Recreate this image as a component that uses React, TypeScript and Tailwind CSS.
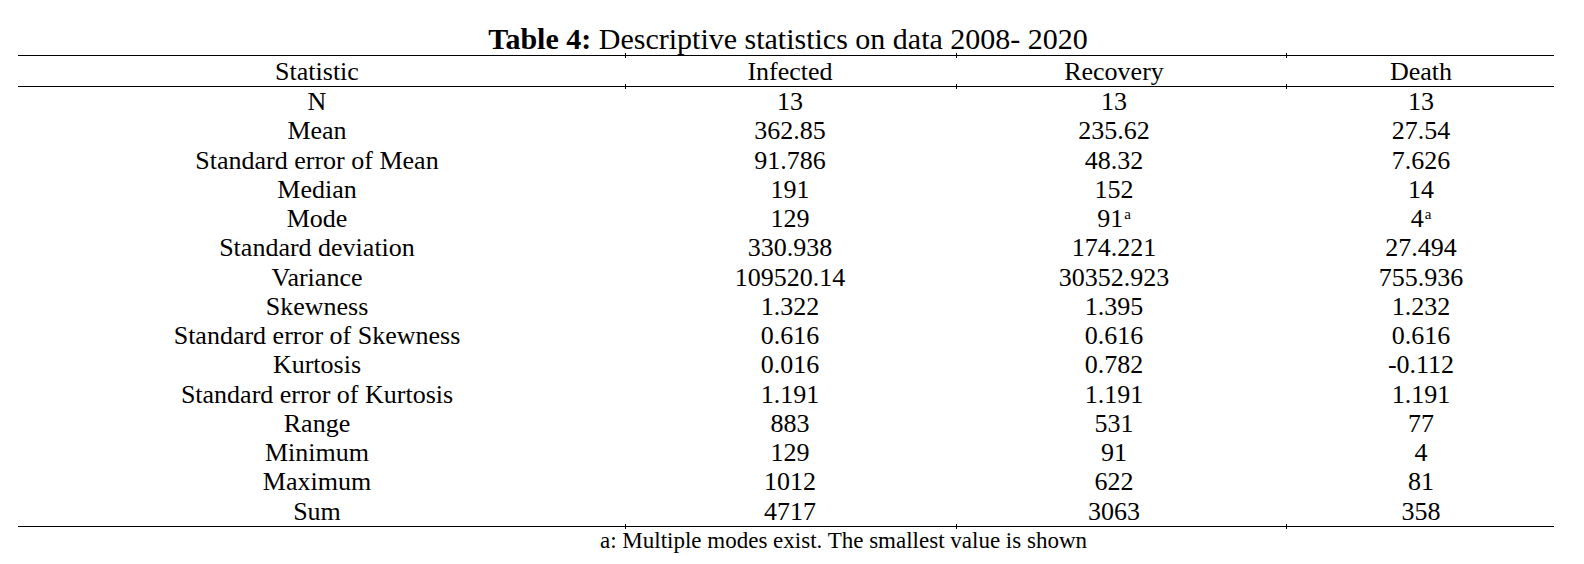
const rows: [string, string, string, string][] = [
  ["N", "13", "13", "13"],
  ["Mean", "362.85", "235.62", "27.54"],
  ["Standard error of Mean", "91.786", "48.32", "7.626"],
  ["Median", "191", "152", "14"],
  ["Mode", "129", "91ᵃ", "4ᵃ"],
  ["Standard deviation", "330.938", "174.221", "27.494"],
  ["Variance", "109520.14", "30352.923", "755.936"],
  ["Skewness", "1.322", "1.395", "1.232"],
  ["Standard error of Skewness", "0.616", "0.616", "0.616"],
  ["Kurtosis", "0.016", "0.782", "-0.112"],
  ["Standard error of Kurtosis", "1.191", "1.191", "1.191"],
  ["Range", "883", "531", "77"],
  ["Minimum", "129", "91", "4"],
  ["Maximum", "1012", "622", "81"],
  ["Sum", "4717", "3063", "358"],
];

function Cell({ value }: { value: string }) {
  if (value.endsWith("ᵃ")) {
    return (
      <>
        {value.slice(0, -1)}
        <span className="text-[15px] relative -top-[8px] ml-px">a</span>
      </>
    );
  }
  return <>{value}</>;
}

// small tick marks that Word leaves where column borders meet the rules
function Ticks() {
  return (
    <>
      <span className="absolute left-[607px] -top-[2px] w-px h-[5px] bg-black" />
      <span className="absolute left-[938px] -top-[2px] w-px h-[5px] bg-black" />
      <span className="absolute left-[1268px] -top-[2px] w-px h-[5px] bg-black" />
    </>
  );
}

const cols = "grid grid-cols-[598px_348px_300px_290px] text-center";

export default function App() {
  return (
    <div className="w-[1584px] h-[564px] bg-white text-black font-['Liberation_Serif',serif] pt-[23px] pl-[18px]">
      <div className="w-[1536px]">
        <h1 className="text-center text-[30px] leading-[31px] h-[32px] pl-[4px]">
          <span className="font-bold">Table 4:</span> Descriptive statistics on data 2008- 2020
        </h1>
        <div className="relative h-px bg-black"><Ticks /></div>
        <div className={`${cols} text-[26px] h-[30px] leading-[32px]`}>
          <div>Statistic</div>
          <div>Infected</div>
          <div>Recovery</div>
          <div className="pl-[24px]">Death</div>
        </div>
        <div className="relative h-px bg-black"><Ticks /></div>
        <div className="flex flex-col text-[26px]">
          {rows.map((r) => (
            <div key={r[0]} className={`${cols} h-[29.27px] leading-[29.27px]`}>
              <div>{r[0]}</div>
              <div><Cell value={r[1]} /></div>
              <div><Cell value={r[2]} /></div>
              <div className="pl-[24px]"><Cell value={r[3]} /></div>
            </div>
          ))}
        </div>
        <div className="relative h-px bg-black"><Ticks /></div>
        <p className="text-[23px] leading-[24px] mt-[2px] pl-[582px]">
          a: Multiple modes exist. The smallest value is shown
        </p>
      </div>
    </div>
  );
}
